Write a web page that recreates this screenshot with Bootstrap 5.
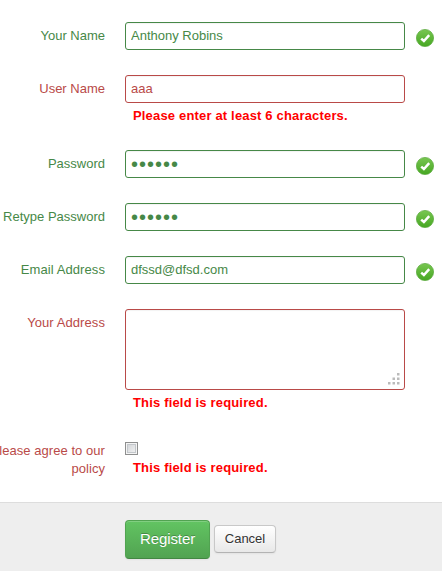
<!DOCTYPE html>
<html lang="en">
<head>
<meta charset="utf-8">
<meta name="viewport" content="width=device-width, initial-scale=1">
<title>Register</title>
<link href="https://cdn.jsdelivr.net/npm/bootstrap@5.3.0/dist/css/bootstrap.min.css" rel="stylesheet">
<style>
body{font-family:"Liberation Sans",Arial,sans-serif;font-size:13px;line-height:18px;background:#fff;overflow:hidden}
.signup{padding-top:22px}
.field-row{height:53px}
.row-message{height:75px}
.row-address{height:127px}
.row-policy{height:66px}
.is-ok{color:#468847}
.is-bad{color:#b94a48}
.field-label{width:105px;margin-right:20px;padding-top:5px;text-align:right;white-space:nowrap}
.label-wide{letter-spacing:.08px}
.row-policy .field-label{padding-top:6px;letter-spacing:.05px}
.field-body{width:280px}
.field-body .form-control{height:28px;padding:4px 5px 5px;border:1px solid currentColor;border-radius:3px;color:inherit;background:#fff;font-size:13px;line-height:18px;box-shadow:inset 0 1px 1px rgba(0,0,0,.05)}
.field-body input[type=password]{font-size:20px;letter-spacing:1px;padding:5px 5px 4px}
.field-body textarea.form-control{height:81px;resize:none;display:block}
.error-text{color:#f00;font-weight:bold;padding-left:8px;margin-top:4px;white-space:nowrap;letter-spacing:.17px}
.tick{margin:7px 0 0 11px}
.grip{right:5px;bottom:5px}
.policy-check{appearance:none;display:block;width:13px;height:13px;margin:6px 0 0;border:1px solid #8e8f8f;box-shadow:inset 0 0 0 1px #f4f4f4,inset 0 0 0 2px #c3c7cb;background:linear-gradient(135deg,#cdd0d4,#f6f6f6)}
.form-foot{height:69px;background:#eee;border-top:1px solid #ddd;padding:17px 0 0 125px;gap:4px}
.btn-register{width:85px;height:39px;padding:0 0 1px;font-size:15px;letter-spacing:-.1px;color:#fff;text-shadow:0 -1px 0 rgba(0,0,0,.25);background:linear-gradient(#62c462,#51a351);border:1px solid #51a351;border-bottom-color:#428742;border-radius:4px;box-shadow:inset 0 1px 0 rgba(255,255,255,.2),0 1px 2px rgba(0,0,0,.05)}
.btn-cancel{width:62px;height:28px;margin-top:5px;padding:0;font-size:13px;line-height:18px;color:#333;text-shadow:0 1px 1px rgba(255,255,255,.75);background:linear-gradient(#fff,#e8e8e8);border:1px solid #c8c8c8;border-bottom-color:#b3b3b3;border-radius:4px;box-shadow:inset 0 1px 0 rgba(255,255,255,.2),0 1px 2px rgba(0,0,0,.05)}
</style>
</head>
<body>
<svg class="position-absolute" width="0" height="0">
  <defs>
    <linearGradient id="leaf" x1="0" y1="0" x2="0" y2="1"><stop offset="0" stop-color="#78c651"/><stop offset="1" stop-color="#46a722"/></linearGradient>
    <symbol id="tick" viewBox="0 0 18 18"><circle cx="9" cy="9" r="8.6" fill="url(#leaf)" stroke="#58a83a" stroke-width=".7"/><path d="M5.200 9.600 7.900 12 13.200 6.200" fill="none" stroke="#fff" stroke-width="2.500"/></symbol>
  </defs>
</svg>
<form class="signup">
  <div class="field-row d-flex align-items-start is-ok">
    <label class="field-label" for="name">Your Name</label>
    <div class="field-body"><input id="name" class="form-control" type="text" value="Anthony Robins"></div>
    <svg class="tick" width="18" height="18"><use href="#tick"/></svg>
  </div>
  <div class="row-message d-flex align-items-start is-bad">
    <label class="field-label" for="user">User Name</label>
    <div class="field-body"><input id="user" class="form-control" type="text" value="aaa"><div class="error-text">Please enter at least 6 characters.</div></div>
  </div>
  <div class="field-row d-flex align-items-start is-ok">
    <label class="field-label" for="pass">Password</label>
    <div class="field-body"><input id="pass" class="form-control" type="password" value="secret"></div>
    <svg class="tick" width="18" height="18"><use href="#tick"/></svg>
  </div>
  <div class="field-row d-flex align-items-start is-ok">
    <label class="field-label" for="pass2">Retype Password</label>
    <div class="field-body"><input id="pass2" class="form-control" type="password" value="secret"></div>
    <svg class="tick" width="18" height="18"><use href="#tick"/></svg>
  </div>
  <div class="field-row d-flex align-items-start is-ok">
    <label class="field-label label-wide" for="email">Email Address</label>
    <div class="field-body"><input id="email" class="form-control" type="text" value="dfssd@dfsd.com"></div>
    <svg class="tick" width="18" height="18"><use href="#tick"/></svg>
  </div>
  <div class="row-address d-flex align-items-start is-bad">
    <label class="field-label label-wide" for="address">Your Address</label>
    <div class="field-body">
      <div class="position-relative">
        <textarea id="address" class="form-control"></textarea>
        <svg class="grip position-absolute" width="12" height="12" fill="#bbb"><path d="M9 0h2.5v2.5H9zM4.5 4.5H7V7H4.500zM9 4.500h2.500V7H9zM0 9h2.500v2.500H0zM4.500 9H7v2.500H4.500zM9 9h2.500v2.500H9z"/></svg>
      </div>
      <div class="error-text">This field is required.</div>
    </div>
  </div>
  <div class="row-policy d-flex align-items-start is-bad">
    <label class="field-label d-flex flex-column align-items-end" for="policy"><span>Please agree to our</span><span>policy</span></label>
    <div class="field-body"><input id="policy" class="policy-check" type="checkbox"><div class="error-text">This field is required.</div></div>
  </div>
  <div class="form-foot d-flex align-items-start">
    <button class="btn btn-register" type="button">Register</button>
    <button class="btn btn-cancel" type="button">Cancel</button>
  </div>
</form>
<script src="https://cdn.jsdelivr.net/npm/bootstrap@5.3.0/dist/js/bootstrap.bundle.min.js"></script>
</body>
</html>
